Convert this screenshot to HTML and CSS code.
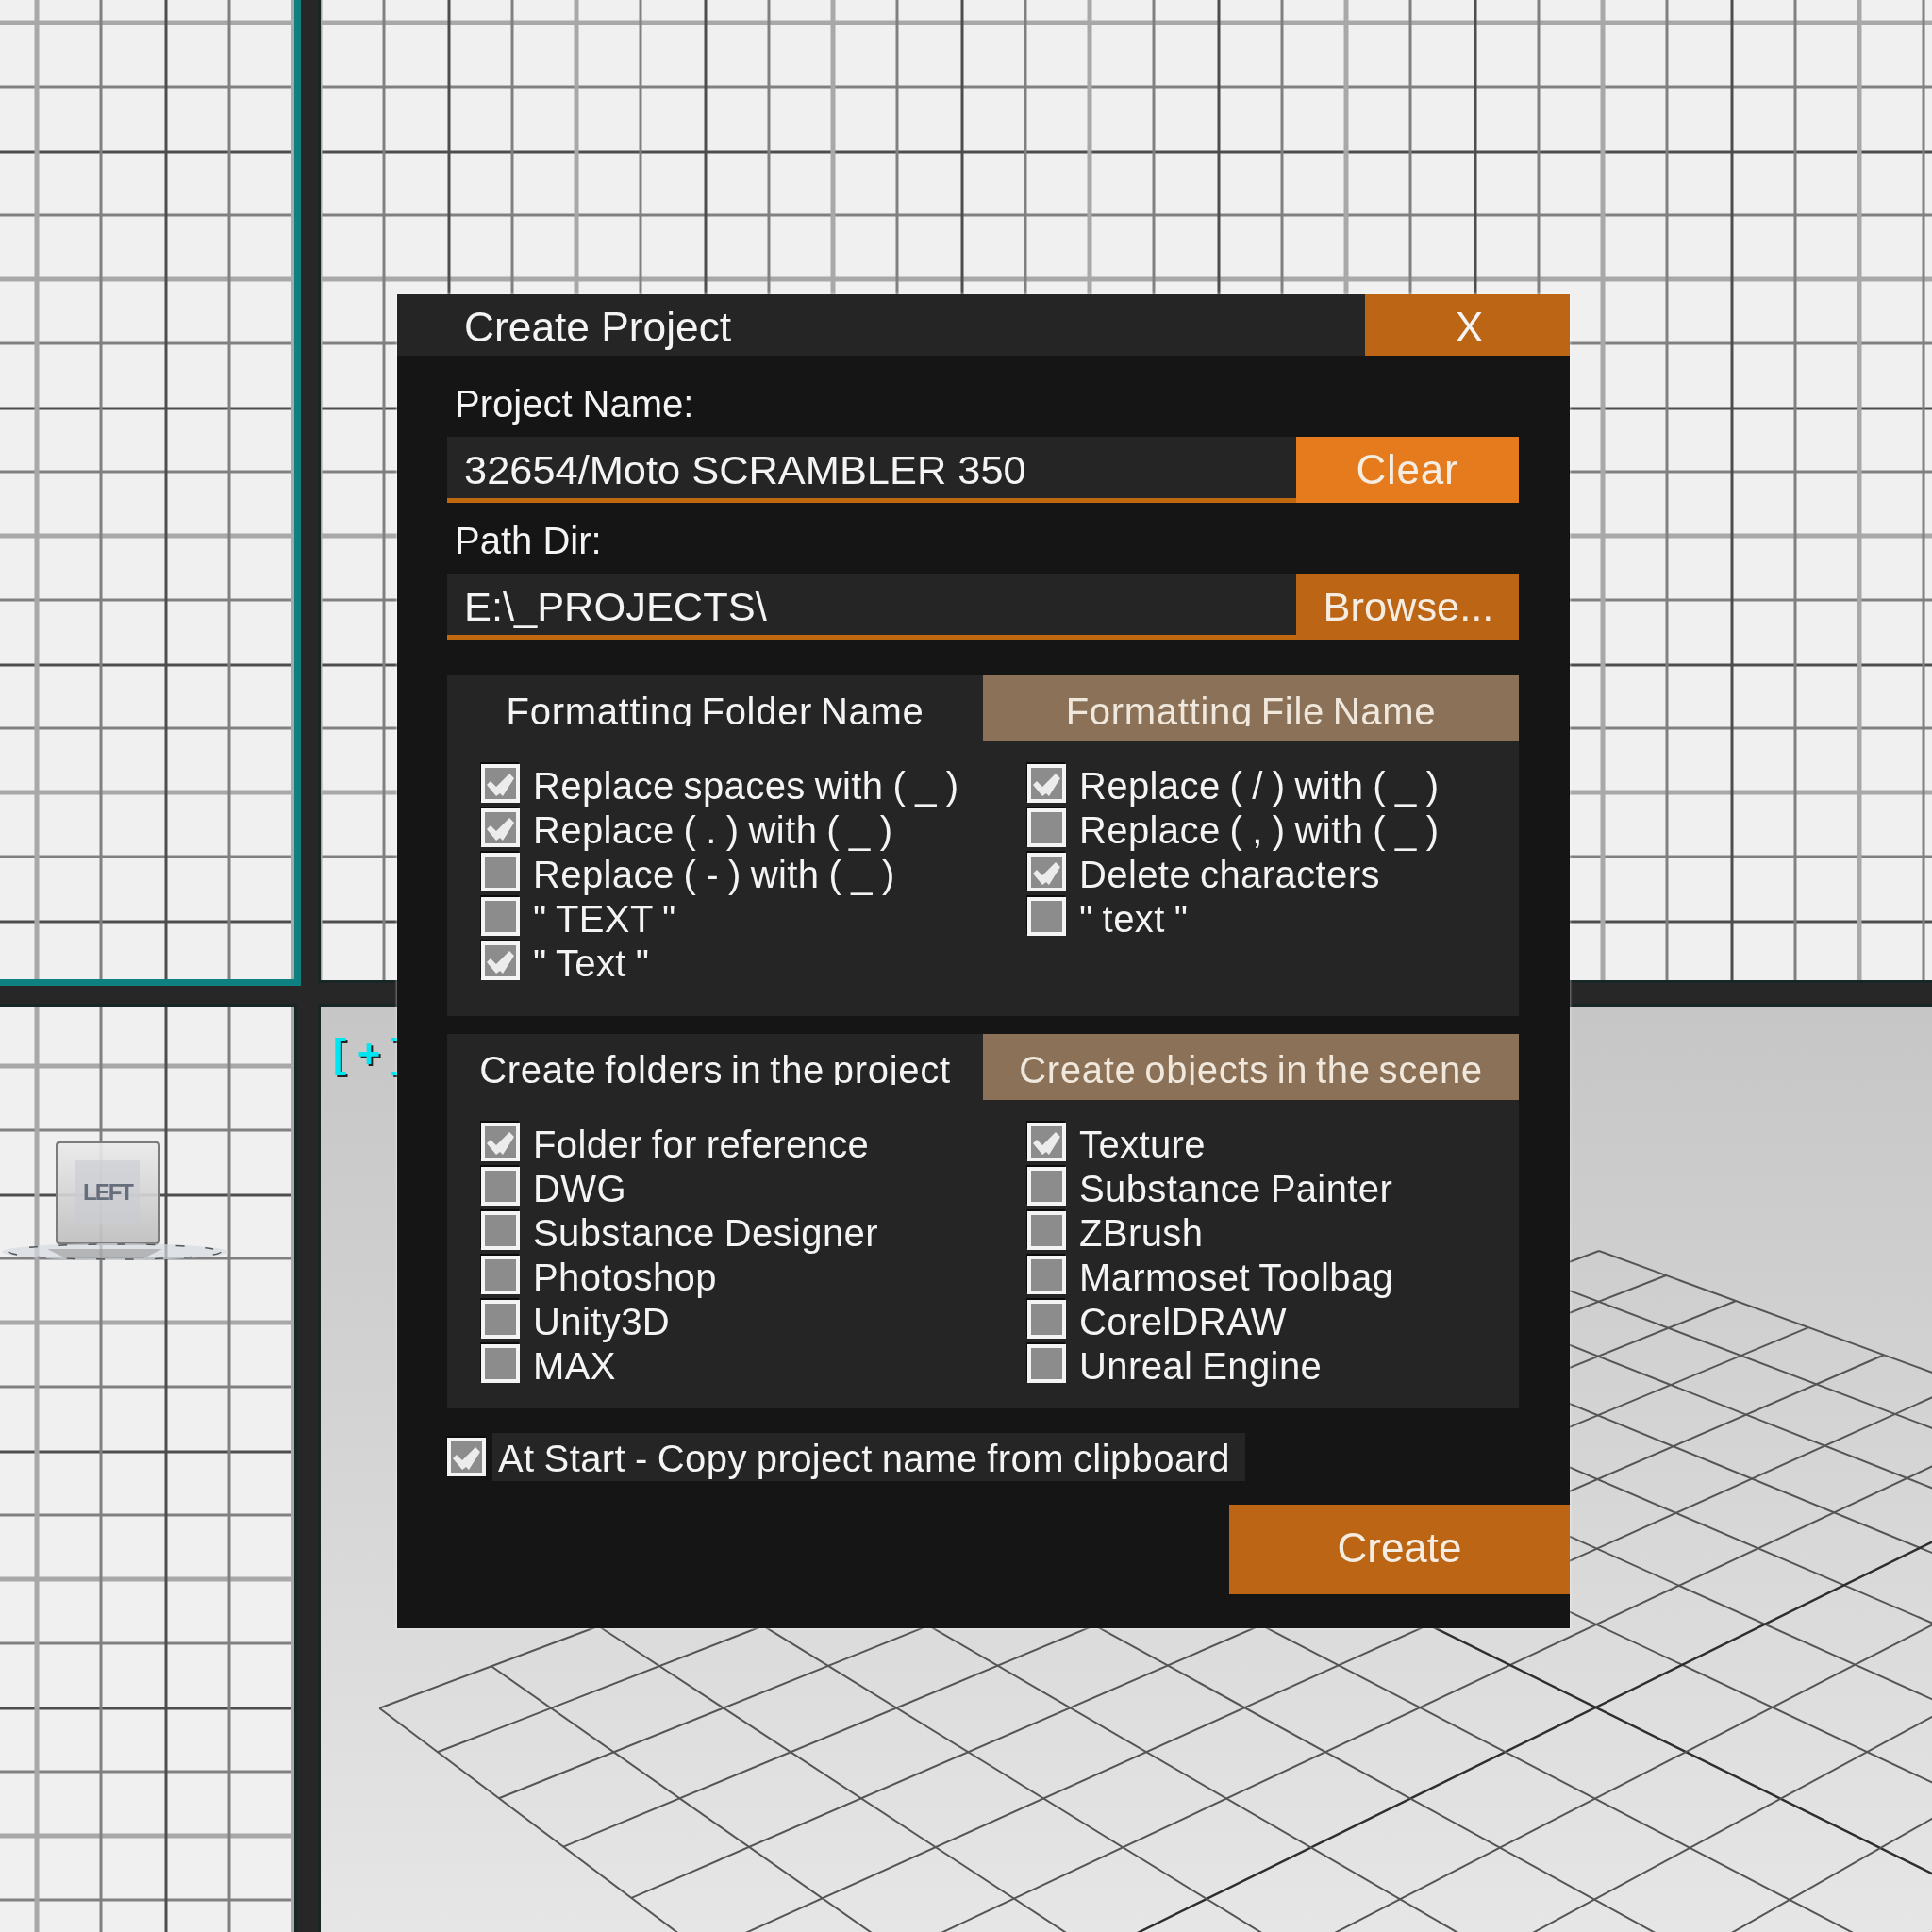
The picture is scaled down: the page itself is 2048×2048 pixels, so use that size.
FILE: index.html
```html
<!DOCTYPE html>
<html lang="en">
<head>
    <meta charset="UTF-8">
    <title>Create Project</title>
    <link rel="stylesheet" href="styles.css">
</head>
<body>
    <div class="viewports">
        <div class="view grid-view view-top active"></div>
        <div class="view grid-view view-front"></div>

        <div class="view grid-view view-left">
            <div class="cube">
                <div class="cube-face">LEFT</div>
            </div>
            <svg class="compass" viewBox="0 0 250 30">
                <ellipse cx="122" cy="15" rx="120" ry="9" fill="#d6dbe2" opacity="0.7"/>
                <ellipse cx="122" cy="15" rx="112" ry="8" fill="none" stroke="#555" stroke-width="1.5" stroke-dasharray="9 22"/>
                <path d="M50 12h122l-20 10H70z" fill="#8f8f8f" opacity="0.55"/>
            </svg>
        </div>

        <div class="view view-persp">
            <svg class="floor" id="floor"></svg>
            <span class="view-tag">[ + ]</span>
        </div>
    </div>

    <div class="dialog">
        <div class="title-bar">
            <div class="title">Create Project</div>
            <div class="close">X</div>
        </div>

        <div class="dialog-body">
            <div class="field-label">Project Name:</div>
            <div class="field">
                <div class="input">32654/Moto SCRAMBLER 350</div>
                <div class="btn btn-clear">Clear</div>
            </div>

            <div class="field-label">Path Dir:</div>
            <div class="field">
                <div class="input">E:\_PROJECTS\</div>
                <div class="btn btn-browse">Browse...</div>
            </div>

            <div class="panel panel-format">
                <div class="tabs">
                    <div class="tab"><span>Formatting Folder Name</span></div>
                    <div class="tab tab-on"><span>Formatting File Name</span></div>
                </div>
                <div class="columns">
                    <div class="col">
                        <div class="check"><i class="box on"></i><span>Replace spaces with ( _ )</span></div>
                        <div class="check"><i class="box on"></i><span>Replace ( . ) with ( _ )</span></div>
                        <div class="check"><i class="box"></i><span>Replace ( - ) with ( _ )</span></div>
                        <div class="check"><i class="box"></i><span>" TEXT "</span></div>
                        <div class="check"><i class="box on"></i><span>" Text "</span></div>
                    </div>
                    <div class="col col-right">
                        <div class="check"><i class="box on"></i><span>Replace ( / ) with ( _ )</span></div>
                        <div class="check"><i class="box"></i><span>Replace ( , ) with ( _ )</span></div>
                        <div class="check"><i class="box on"></i><span>Delete characters</span></div>
                        <div class="check"><i class="box"></i><span>" text "</span></div>
                    </div>
                </div>
            </div>

            <div class="panel panel-create">
                <div class="tabs">
                    <div class="tab"><span>Create folders in the project</span></div>
                    <div class="tab tab-on"><span>Create objects in the scene</span></div>
                </div>
                <div class="columns">
                    <div class="col">
                        <div class="check"><i class="box on"></i><span>Folder for reference</span></div>
                        <div class="check"><i class="box"></i><span>DWG</span></div>
                        <div class="check"><i class="box"></i><span>Substance Designer</span></div>
                        <div class="check"><i class="box"></i><span>Photoshop</span></div>
                        <div class="check"><i class="box"></i><span>Unity3D</span></div>
                        <div class="check"><i class="box"></i><span>MAX</span></div>
                    </div>
                    <div class="col col-right">
                        <div class="check"><i class="box on"></i><span>Texture</span></div>
                        <div class="check"><i class="box"></i><span>Substance Painter</span></div>
                        <div class="check"><i class="box"></i><span>ZBrush</span></div>
                        <div class="check"><i class="box"></i><span>Marmoset Toolbag</span></div>
                        <div class="check"><i class="box"></i><span>CorelDRAW</span></div>
                        <div class="check"><i class="box"></i><span>Unreal Engine</span></div>
                    </div>
                </div>
            </div>

            <div class="start-row">
                <i class="box on"></i>
                <span class="start-label">At Start - Copy project name from clipboard</span>
            </div>

            <div class="actions">
                <div class="btn btn-create">Create</div>
            </div>
        </div>
    </div>

    <script src="floor.js"></script>
</body>
</html>
```

FILE: styles.css
```css
* {
    margin: 0;
    padding: 0;
    box-sizing: border-box;
}

body {
    width: 2048px;
    height: 2048px;
    overflow: hidden;
    position: relative;
    background: #272727;
    font-family: "Liberation Sans", Arial, sans-serif;
    font-size: 40px;
    color: #f4f4f4;
}

/* viewports */
.viewports {
    display: grid;
    grid-template-columns: 319px 1fr;
    grid-template-rows: 1045px 1fr;
    column-gap: 21px;
    row-gap: 22px;
    height: 100%;
    filter: blur(0.5px);
}

.view {
    position: relative;
    overflow: hidden;
}

.grid-view {
    background-color: #f0f0f0;
    background-image:
        linear-gradient(90deg, #4d4d4d 0 2px, transparent 3px 66px, #808080 67px 69px, transparent 70px 133px, #a8a8a8 134px 138px, transparent 139px 202px, #808080 203px 205px, transparent 206px 271px, #4d4d4d 272px),
        linear-gradient(180deg, #4d4d4d 0 2px, transparent 3px 66px, #808080 67px 69px, transparent 70px 133px, #a8a8a8 134px 138px, transparent 139px 202px, #808080 203px 205px, transparent 206px 271px, #4d4d4d 272px);
    background-size: 272px 100%, 100% 272px;
}

.view-top {
    background-position: 175px 0, 0 160px;
    border-right: 7px solid #0f8080;
    border-bottom: 7px solid #0f8080;
}

.view-front {
    background-position: 135px 0, 0 160px;
    margin-bottom: 6px;
    box-shadow: 0 0 0 3px #182626;
}

.view-left {
    background-position: 175px 0, 0 199px;
    margin-right: 7px;
    box-shadow: 0 0 0 3px #182626;
}

.view-persp {
    background: linear-gradient(180deg, #c6c6c6 0%, #d2d2d2 40%, #e6e6e6 100%);
    box-shadow: 0 0 0 3px #182626;
}

.floor {
    position: absolute;
    top: 0;
    left: 0;
    width: 100%;
    height: 100%;
}

.view-tag {
    position: absolute;
    left: 13px;
    top: 26px;
    font-size: 42px;
    font-weight: bold;
    line-height: 48px;
    white-space: pre;
    color: #00e6f0;
    text-shadow: 2px 2px 0 #222;
}

.cube {
    position: absolute;
    left: 59px;
    top: 142px;
    width: 111px;
    height: 111px;
    padding: 18px;
    border: 3px solid #7c7c7c;
    border-radius: 5px;
    background: linear-gradient(180deg, rgba(234,234,234,0.92), rgba(192,192,192,0.92));
}

.cube-face {
    width: 68px;
    height: 68px;
    background: rgba(200,204,210,0.6);
    color: #666e7c;
    font-size: 24px;
    font-weight: bold;
    letter-spacing: -2px;
    line-height: 68px;
    text-align: center;
}

.compass {
    position: absolute;
    left: 0;
    top: 245px;
    width: 250px;
    height: 30px;
}

/* dialog */
.dialog {
    position: absolute;
    left: 421px;
    top: 312px;
    width: 1243px;
    height: 1414px;
    background: #151515;
    box-shadow: 0 0 2px 1px rgba(255,255,255,0.4);
    filter: blur(0.5px);
}

.title-bar {
    display: flex;
    height: 65px;
    background: #252525;
    font-size: 44.3px;
    line-height: 69px;
}

.title {
    flex: 1;
    padding-left: 71px;
}

.close {
    width: 217px;
    padding-left: 4px;
    background: #bb6515;
    text-align: center;
}

.dialog-body {
    padding: 11px 54px 0 53px;
}

.field-label {
    height: 46px;
    margin: 17px 0 12px 8px;
    line-height: 46px;
}

.field {
    display: flex;
    height: 70px;
}

.input {
    flex: 1;
    padding-left: 18px;
    background: #252525;
    border-bottom: 5px solid #c0680f;
    font-size: 43.4px;
    line-height: 70px;
}

.btn {
    width: 236px;
    background: #bb6515;
    color: #f5ece2;
    font-size: 44px;
    line-height: 70px;
    text-align: center;
}

.btn-clear {
    background: #e67b1d;
    letter-spacing: 0.8px;
}

.btn-browse {
    font-size: 43.4px;
    padding-left: 2px;
}

.panel {
    background: #252525;
    height: 361px;
}

.panel-format {
    margin-top: 38px;
}

.panel-create {
    margin-top: 19px;
    height: 397px;
}

.tabs {
    display: grid;
    grid-template-columns: 568px 1fr;
    height: 70px;
}

.tab {
    padding-top: 16px;
    text-align: center;
    line-height: 44px;
    letter-spacing: 0.7px;
    word-spacing: -3px;
}

.tab span {
    display: block;
    height: 38px;
    overflow: hidden;
}

.tab-on {
    background: #8a7157;
    color: #f0e8dc;
}

.columns {
    display: grid;
    grid-template-columns: 568px 1fr;
    padding-top: 21px;
}

.col {
    padding-left: 36px;
}

.col-right {
    padding-left: 47px;
}

.check {
    display: flex;
    align-items: center;
    gap: 14px;
    height: 47px;
}

.check span {
    margin-top: 6px;
    white-space: nowrap;
    letter-spacing: 0.4px;
    word-spacing: -1.5px;
}

.box {
    position: relative;
    flex: none;
    display: block;
    width: 41px;
    height: 41px;
    background: #8c8c8c;
    border: 4px solid #f4f4f4;
    box-shadow: -1px -2px 0 #0c0c0c;
}

.box.on::after {
    content: '';
    position: absolute;
    left: -1px;
    top: -1px;
    width: 35px;
    height: 35px;
    background: #ececec;
    clip-path: polygon(3px 19px, 7px 15px, 13px 21px, 27px 7px, 32px 12px, 20px 31px, 17px 28px, 13px 31px);
}

.start-row {
    display: flex;
    align-items: center;
    gap: 7px;
    margin-top: 26px;
    height: 51px;
}

.start-label {
    height: 51px;
    padding: 0 16px 0 6px;
    background: #252525;
    line-height: 54px;
    white-space: nowrap;
    letter-spacing: 0.4px;
    word-spacing: -1.5px;
}

.actions {
    display: flex;
    justify-content: flex-end;
    margin: 25px -54px 0 0;
}

.btn-create {
    width: 361px;
    height: 95px;
    line-height: 92px;
}
```

FILE: floor.js
```js
// perspective floor: grid lines projected from the two vanishing points
const apex = [1695, 1326];
const vpU = [5815, -219];
const vpV = [-2064, -46];
const stepU = 0.01706;
const stepV = 0.0186;
const cells = 14;
const origin = [340, 1067];

function project(u, v) {
    const s = stepU * u;
    const t = stepV * v;
    const w = 1 - s - t;
    return [
        (apex[0] - s * vpU[0] - t * vpV[0]) / w - origin[0],
        (apex[1] - s * vpU[1] - t * vpV[1]) / w - origin[1]
    ];
}

const floor = document.getElementById('floor');

function addLine(a, b, center) {
    const line = document.createElementNS('http://www.w3.org/2000/svg', 'line');
    line.setAttribute('x1', a[0]);
    line.setAttribute('y1', a[1]);
    line.setAttribute('x2', b[0]);
    line.setAttribute('y2', b[1]);
    line.setAttribute('stroke', center ? '#2e2e2e' : '#555');
    line.setAttribute('stroke-width', center ? 2.4 : 2);
    floor.appendChild(line);
}

for (let i = 0; i <= cells; i++) {
    addLine(project(i, 0), project(i, cells), i === cells / 2);
    addLine(project(0, i), project(cells, i), i === cells / 2);
}
```
